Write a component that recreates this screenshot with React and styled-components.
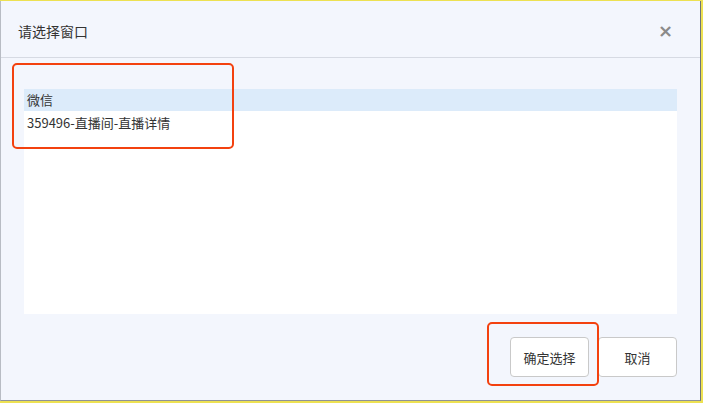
import React from "react";
import styled, { createGlobalStyle } from "styled-components";

const GlobalStyle = createGlobalStyle`
  html, body {
    margin: 0;
    padding: 0;
    overflow: hidden;
  }
  body {
    font-family: "Noto Sans CJK SC", "Noto Sans", sans-serif;
    color: #333;
  }
`;

const items = [
  { id: 1, label: "微信", selected: true },
  { id: 2, label: "359496-直播间-直播详情" },
];

const App = () => (
  <Screen>
    <GlobalStyle />
    <Dialog>
      <Header>
        <Title>请选择窗口</Title>
        <Close>×</Close>
      </Header>
      <Body>
        <List>
          {items.map((item) => (
            <Row key={item.id} $selected={item.selected}>
              {item.label}
            </Row>
          ))}
        </List>
      </Body>
      <Footer>
        <Button>确定选择</Button>
        <Button>取消</Button>
      </Footer>
      <Mark $left={12} $top={63} $width={222} $height={86} />
      <Mark $left={487} $top={322} $width={112} $height={64} />
    </Dialog>
  </Screen>
);

const Screen = styled.div`
  width: 703px;
  height: 403px;
  background: #ede152;
  padding-top: 1px;
  box-sizing: border-box;
`;

const Dialog = styled.div`
  position: relative;
  width: 701px;
  height: 400px;
  box-sizing: border-box;
  background: #f3f6fd;
  border-left: 1px solid #b8bcc4;
  border-right: 1px solid #6f7278;
  border-bottom: 1px solid #8f9298;
  display: flex;
  flex-direction: column;
`;

const Header = styled.div`
  height: 56px;
  flex: none;
  display: flex;
  align-items: center;
  justify-content: space-between;
  padding: 0 27px 0 17px;
  border-bottom: 1px solid #d6dae3;
`;

const Title = styled.div`
  font-size: 14px;
  color: #333;
  margin-top: 4px;
`;

const Close = styled.div`
  font-family: "DejaVu Sans", sans-serif;
  font-size: 18px;
  font-weight: bold;
  color: #8a8a8a;
  margin-top: 2px;
`;

const Body = styled.div`
  flex: none;
  padding: 31px 23px 0 23px;
`;

const List = styled.div`
  height: 225px;
  background: #fff;
`;

const Row = styled.div`
  height: 22px;
  line-height: 22px;
  padding: 0 3px;
  font-size: 13px;
  color: #333;
  background: ${(p) => (p.$selected ? "#dcebfa" : "transparent")};
  margin-bottom: ${(p) => (p.$selected ? "1px" : "0")};
`;

const Footer = styled.div`
  display: flex;
  justify-content: flex-end;
  gap: 9px;
  padding: 23px 23px 0 0;
`;

const Button = styled.button`
  min-width: 79px;
  height: 40px;
  padding: 0 12px;
  background: #fff;
  border: 1px solid #c9c9c9;
  border-radius: 4px;
  font-family: "Noto Sans CJK SC", "Noto Sans", sans-serif;
  font-size: 13px;
  color: #333;
`;

const Mark = styled.div`
  position: absolute;
  left: ${(p) => p.$left - 1}px;
  top: ${(p) => p.$top - 1}px;
  width: ${(p) => p.$width}px;
  height: ${(p) => p.$height}px;
  box-sizing: border-box;
  border: 2px solid #f3410f;
  border-radius: 5px;
  pointer-events: none;
`;

export default App;
